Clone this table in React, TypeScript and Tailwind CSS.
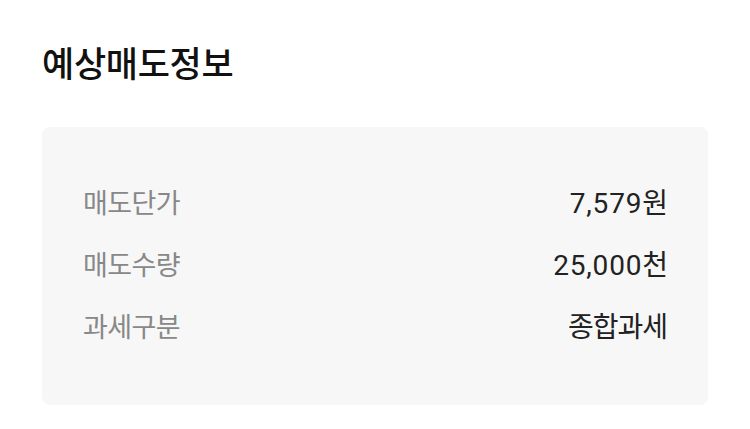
import React from "react";

const rows = [
  { label: "매도단가", num: "7,579", unit: "원" },
  { label: "매도수량", num: "25,000", unit: "천" },
  { label: "과세구분", num: "", unit: "종합과세" },
];

const App: React.FC = () => {
  return (
    <div
      className="w-[750px] h-[429px] bg-white pt-[42px] px-[42px]"
      style={{ fontFamily: 'Roboto, "Noto Sans CJK KR", sans-serif' }}
    >
      <h1 className="text-[35px] leading-[48px] font-medium text-[#111] tracking-[-0.3px]">
        예상매도정보
      </h1>

      <div className="mt-[37px] w-[666px] h-[278px] bg-[#f7f7f7] rounded-[8px] px-[41px] pt-[57px] flex flex-col gap-[22px]">
        {rows.map((row) => (
          <div
            key={row.label}
            className="flex justify-between items-center h-[40px] text-[27px]"
          >
            <span className="text-[#888] tracking-[-0.6px]">{row.label}</span>
            <span className="text-[#222] text-[28px] tracking-[-1px]">
              {row.num && <span className="tracking-[0.8px]">{row.num}</span>}
              {row.unit}
            </span>
          </div>
        ))}
      </div>
    </div>
  );
};

export default App;
